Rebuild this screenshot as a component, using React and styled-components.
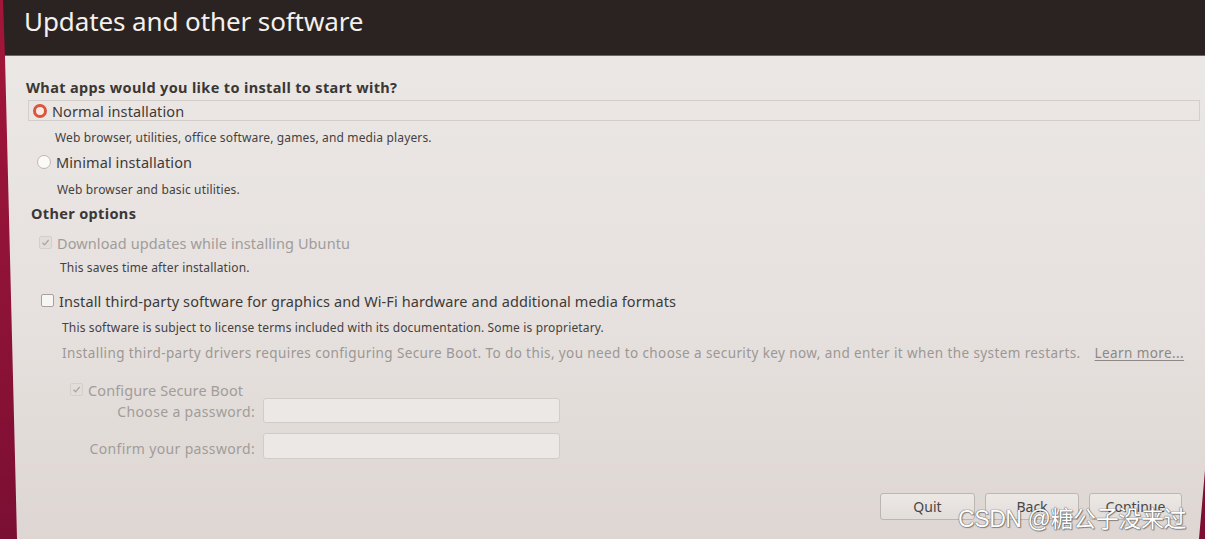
import styled, { createGlobalStyle } from "styled-components"

const Global = createGlobalStyle`
  html, body {
    margin: 0;
    padding: 0;
    width: 1205px;
    height: 539px;
    overflow: hidden;
    background: linear-gradient(180deg, #a3163a 0%, #8c1236 60%, #7a0f33 100%);
  }
  * { box-sizing: border-box; }
`

const font = `"Noto Sans", "Open Sans", sans-serif`

const Window = styled.div`
  position: relative;
  width: 1205px;
  height: 539px;
  display: flex;
  flex-direction: column;
  font-family: ${font};
  clip-path: polygon(3px 0, 100% 0, 100% 470px, 1199px 100%, 17px 100%, 5px 57px);
`

const Header = styled.div`
  height: 56px;
  flex: none;
  background: #2b2321;
  border-bottom: 1px solid #6e6663;
  display: flex;
  align-items: flex-start;
  padding: 3px 0 0 24px;
`

const Title = styled.h1`
  margin: 0;
  font-family: ${font};
  font-weight: 400;
  font-size: 26px;
  letter-spacing: -0.1px;
  color: #f4f0ed;
`

const Body = styled.div`
  flex: 1;
  display: flex;
  flex-direction: column;
  background: linear-gradient(180deg, #ebe7e4 0%, #e6e1de 55%, #ddd6d3 100%);
  padding-top: 22px;
`

const Heading = styled.div`
  margin: ${p => p.$mt || 0}px 0 0 ${p => p.$ml}px;
  font-size: 14.5px;
  line-height: 18px;
  font-weight: 700;
  color: #3a3735;
  letter-spacing: 0.35px;
`

const OptionRow = styled.div`
  display: flex;
  align-items: center;
  gap: 5px;
  height: 21px;
  margin: ${p => p.$mt}px 0 0 ${p => p.$ml}px;
  padding-left: ${p => p.$focus ? 4 : 0}px;
  border: 1px solid ${p => p.$focus ? "#d3ceca" : "transparent"};
  margin-right: ${p => p.$focus ? 5 : 0}px;
  font-size: 14.5px;
  letter-spacing: 0.1px;
  color: ${p => p.$disabled ? "#a19c99" : "#3d3a38"};
`

const Radio = styled.span`
  width: 14px;
  height: 14px;
  border-radius: 50%;
  flex: none;
  background: ${p => p.$on ? "#fbeae4" : "#fbfaf9"};
  border: ${p => p.$on ? "3.5px solid #d9553b" : "1px solid #bdb7b3"};
`

const Check = styled.span`
  width: 13px;
  height: 13px;
  flex: none;
  border-radius: 2px;
  border: 1px solid ${p => p.$disabled ? "#d4cfcb" : "#a7a19d"};
  background: ${p => p.$disabled ? "#e2ddd9" : "#f8f6f5"};
  display: flex;
  align-items: center;
  justify-content: center;
`

const Desc = styled.div`
  margin: ${p => p.$mt}px 0 0 ${p => p.$ml}px;
  font-size: ${p => p.$size || 12}px;
  line-height: ${p => p.$lh || 16}px;
  letter-spacing: ${p => p.$ls ?? 0.15}px;
  color: ${p => p.$grey ? "#9c9794" : "#45413f"};
  display: flex;
  white-space: nowrap;
`

const Learn = styled.span`
  margin-left: 14px;
  text-decoration: underline;
  text-underline-offset: 2px;
  color: #8d8885;
`

const PassGrid = styled.div`
  display: grid;
  grid-template-columns: 176px 297px;
  column-gap: 8px;
  row-gap: 10px;
  margin: ${p => p.$mt}px 0 0 ${p => p.$ml}px;
  align-items: center;
`

const PassLabel = styled.div`
  text-align: right;
  white-space: nowrap;
  font-size: 14px;
  letter-spacing: 0.35px;
  color: #a19c99;
  margin-top: ${p => p.$dy || 0}px;
`

const Field = styled.div`
  height: ${p => p.$h}px;
  border: 1px solid #d2ccc8;
  border-radius: 3px;
  background: #ece8e5;
`

const Buttons = styled.div`
  display: flex;
  justify-content: flex-end;
  gap: 10px;
  margin: 34px 23px 0 0;
`

const Button = styled.div`
  width: ${p => p.$w}px;
  height: 27px;
  border: 1px solid #bcb6b2;
  border-radius: 3px;
  background: linear-gradient(180deg, #ece8e5, #e2ddd9);
  display: flex;
  align-items: center;
  justify-content: center;
  font-size: 14px;
  color: #4a4644;
`

const Watermark = styled.div`
  position: absolute;
  left: 958px;
  top: 500px;
  font-family: "Liberation Sans", "Noto Sans CJK SC", sans-serif;
  font-size: 23px;
  color: #ffffff;
  letter-spacing: -0.4px;
  text-shadow: 0 0 1px #555, 0 0 1px #555, 1px 1px 1px rgba(0,0,0,0.35);
  white-space: nowrap;
`

function Tick({ color }) {
  return (
    <svg width="9" height="9" viewBox="0 0 9 9">
      <path d="M1.5 4.8 L3.6 6.8 L7.6 2" fill="none" stroke={color} strokeWidth="1.2" />
    </svg>
  )
}

export default function App() {
  return (
    <>
      <Global />
      <Window>
        <Header>
          <Title>Updates and other software</Title>
        </Header>
        <Body>
          <Heading $ml={26}>What apps would you like to install to start with?</Heading>
          <OptionRow $mt={4} $ml={28} $focus>
            <Radio $on />
            Normal installation
          </OptionRow>
          <Desc $mt={9} $ml={55}>Web browser, utilities, office software, games, and media players.</Desc>
          <OptionRow $mt={5} $ml={36}>
            <Radio />
            Minimal installation
          </OptionRow>
          <Desc $mt={10} $ml={57}>Web browser and basic utilities.</Desc>
          <Heading $mt={6} $ml={31}>Other options</Heading>
          <OptionRow $mt={10} $ml={38} $disabled>
            <Check $disabled><Tick color="#a9a4a0" /></Check>
            Download updates while installing Ubuntu
          </OptionRow>
          <Desc $mt={7} $ml={60}>This saves time after installation.</Desc>
          <OptionRow $mt={14} $ml={40}>
            <Check />
            Install third-party software for graphics and Wi-Fi hardware and additional media formats
          </OptionRow>
          <Desc $mt={9} $ml={62}>This software is subject to license terms included with its documentation. Some is proprietary.</Desc>
          <Desc $mt={8} $ml={62} $grey $size={13.5} $lh={18} $ls={0.4}>
            Installing third-party drivers requires configuring Secure Boot. To do this, you need to choose a security key now, and enter it when the system restarts.
            <Learn>Learn more...</Learn>
          </Desc>
          <OptionRow $mt={17} $ml={69} $disabled>
            <Check $disabled><Tick color="#a9a4a0" /></Check>
            Configure Secure Boot
          </OptionRow>
          <PassGrid $mt={-2} $ml={79}>
            <PassLabel $dy={2}>Choose a password:</PassLabel>
            <Field $h={25} />
            <PassLabel $dy={4}>Confirm your password:</PassLabel>
            <Field $h={26} />
          </PassGrid>
          <Buttons>
            <Button $w={95}>Quit</Button>
            <Button $w={94}>Back</Button>
            <Button $w={93}>Continue</Button>
          </Buttons>
        </Body>
        <Watermark>CSDN @糖公子没来过</Watermark>
      </Window>
    </>
  )
}
